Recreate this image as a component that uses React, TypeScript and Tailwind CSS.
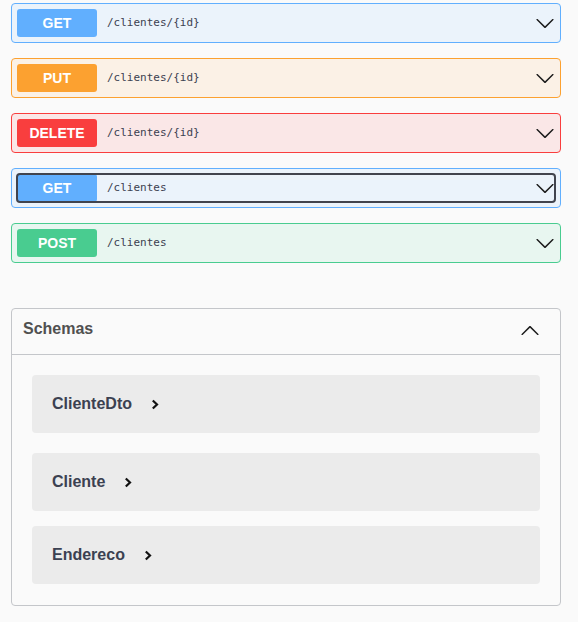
import React from "react";

type Op = {
  method: string;
  path: string;
  badge: string;
  border: string;
  bg: string;
  focused?: boolean;
};

const ops: Op[] = [
  { method: "GET", path: "/clientes/{id}", badge: "bg-[#61affe]", border: "border-[#61affe]", bg: "bg-[#ebf3fb]" },
  { method: "PUT", path: "/clientes/{id}", badge: "bg-[#fca130]", border: "border-[#fca130]", bg: "bg-[#fbf1e6]" },
  { method: "DELETE", path: "/clientes/{id}", badge: "bg-[#f93e3e]", border: "border-[#f93e3e]", bg: "bg-[#fae7e7]" },
  { method: "GET", path: "/clientes", badge: "bg-[#61affe]", border: "border-[#61affe]", bg: "bg-[#ebf3fb]", focused: true },
  { method: "POST", path: "/clientes", badge: "bg-[#49cc90]", border: "border-[#49cc90]", bg: "bg-[#e8f6f0]" },
];

function Arrow({ up = false }: { up?: boolean }) {
  return (
    <svg
      width="20"
      height="20"
      viewBox="0 0 20 20"
      className={up ? "rotate-180" : ""}
      fill="#1b1b1b"
    >
      <path d="M17.418 6.109c.272-.268.709-.268.979 0s.271.701 0 .969l-7.908 7.83c-.27.268-.707.268-.979 0l-7.908-7.83c-.27-.268-.27-.701 0-.969.271-.268.709-.268.979 0L10 13.25l7.418-7.141z" />
    </svg>
  );
}

function Caret() {
  return (
    <svg width="8" height="11" viewBox="0 0 8 11">
      <polyline points="1.8,1.5 6,5.5 1.8,9.5" fill="none" stroke="#111" strokeWidth="2.2" />
    </svg>
  );
}

export default function App() {
  const models = [
    { name: "ClienteDto", mb: "mb-[20px]" },
    { name: "Cliente", mb: "mb-[15px]" },
    { name: "Endereco", mb: "mb-[21px]" },
  ];

  return (
    <div
      className="min-h-[622px] bg-[#fafafa] pt-[3px] pl-[11px] pr-[17px]"
      style={{ fontFamily: '"Liberation Sans", Arial, sans-serif' }}
    >
      {/* Operations */}
      {ops.map((op, i) => (
        <div
          key={i}
          className={`relative mb-[15px] h-[40px] rounded-[4px] border ${op.border} ${op.bg} p-[5px] flex items-center`}
        >
          <span
            className={`${op.badge} w-[80px] h-[28px] rounded-[3px] flex items-center justify-center text-[14px] font-bold text-white`}
          >
            {op.method}
          </span>
          <span
            className="px-[10px] text-[11px] font-normal text-[#3b4151]"
            style={{ fontFamily: '"DejaVu Sans Mono", monospace' }}
          >
            {op.path}
          </span>
          <span className="ml-auto flex items-center">
            <Arrow />
          </span>
          {op.focused && (
            <div className="absolute inset-[4px] rounded-[4px] border-2 border-[#41444e] pointer-events-none" />
          )}
        </div>
      ))}

      {/* Schemas */}
      <div className="mt-[45px] rounded-[4px] border border-[#c4c6ca]">
        <div className="h-[46px] flex items-center justify-between pl-[11px] pr-[20px] border-b border-[#c4c6ca]">
          <span className="mb-[6px] text-[16px] font-bold text-[#505050]">Schemas</span>
          <span className="mb-[2px] flex">
            <Arrow up />
          </span>
        </div>
        <div className="pt-[20px] px-[20px]">
          {models.map((m) => (
            <div
              key={m.name}
              className={`${m.mb} h-[58px] rounded-[4px] bg-[#ebebeb] pl-[20px] flex items-center gap-[19px]`}
            >
              <span className="text-[16px] font-bold text-[#3b4151]">{m.name}</span>
              <Caret />
            </div>
          ))}
        </div>
      </div>
    </div>
  );
}
